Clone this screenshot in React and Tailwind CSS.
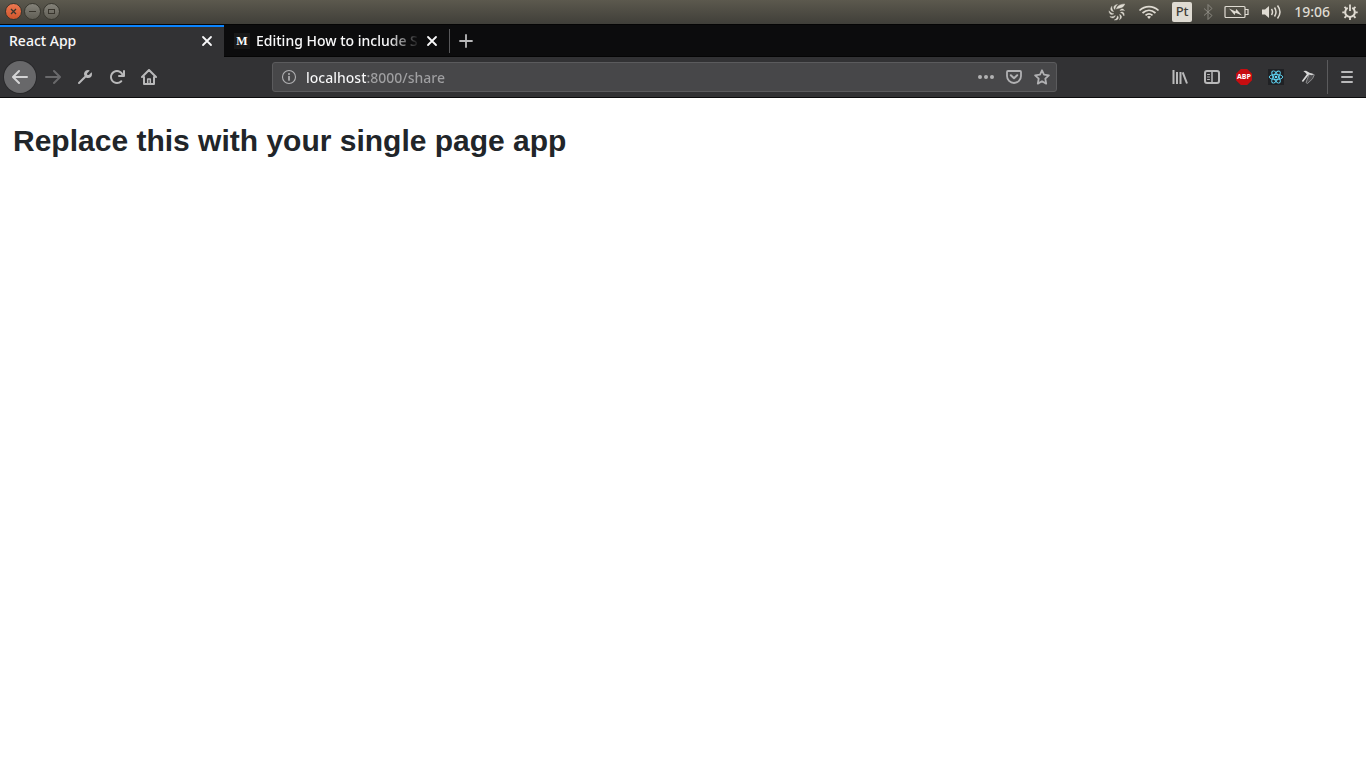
import React from 'react';

function Icon({ children, className = '', viewBox = '0 0 16 16', fill = 'none' }) {
  return (
    <svg
      className={`size-4 shrink-0 ${className}`}
      viewBox={viewBox}
      fill={fill}
      stroke={fill === 'none' ? 'currentColor' : 'none'}
      strokeWidth="2"
      strokeLinecap="round"
      strokeLinejoin="round"
      aria-hidden="true"
    >
      {children}
    </svg>
  );
}

function ToolButton({ label, children, className = 'text-[#b9b9ba]' }) {
  return (
    <button
      type="button"
      aria-label={label}
      className={`flex size-8 shrink-0 items-center justify-center ${className}`}
    >
      {children}
    </button>
  );
}

function WindowButton({ label, close = false, children }) {
  const tone = close
    ? 'bg-linear-to-b from-[#ee7850] to-[#d0562c] border-[#38352d]'
    : 'bg-linear-to-b from-[#85837a] to-[#605e55] border-[#38372f]';
  return (
    <button
      type="button"
      aria-label={label}
      className={`flex size-[17px] items-center justify-center rounded-full border text-[#38352d] ${tone}`}
    >
      <svg className="size-[15px]" viewBox="0 0 15 15" fill="none" stroke="currentColor" aria-hidden="true">
        {children}
      </svg>
    </button>
  );
}

function SystemBar() {
  return (
    <header className="flex h-6 items-center justify-between bg-linear-to-b from-[#5c594e] to-[#403f39] pr-2 pl-[5px] text-[#dfdbd2]">
      <div className="flex gap-[2px] pb-px">
        <WindowButton label="Close window" close>
          <path d="M5 5l5 5M10 5l-5 5" strokeWidth="1.3" />
        </WindowButton>
        <WindowButton label="Minimize window">
          <path d="M4 7.5h7" />
        </WindowButton>
        <WindowButton label="Maximize window">
          <rect x="4.5" y="5.5" width="6" height="4" />
        </WindowButton>
      </div>
      <div className="flex items-center">
        <svg className="mr-3 size-[18px]" viewBox="0 0 18 18" fill="currentColor" stroke="currentColor" strokeWidth=".4" role="img" aria-label="Swirl">
          <path d="M8.500 6C9 3 12 1.200 16.800 1C16 3.500 14 4.800 11 5.200Q9.500 5.400 8.500 6z" />
          <path d="M6.800 6.500C5 4.500 5.800 2 9.500 1.500C7.800 2.800 7.300 4.300 6.800 6.500z" />
          <path d="M5.600 8.500C2.800 8.500 1.800 6 3.800 3.300C3.700 5.500 4.300 7 5.600 8.500z" />
          <path d="M5.800 10.800C3.500 12.500 1 11 1 7.800C2.300 9.700 3.700 10.500 5.800 10.800z" />
          <path d="M7.300 12.500C6.800 15.300 4 15.800 1.800 13.500C4 14 5.600 13.700 7.300 12.500z" />
          <path d="M9.500 12.800C11.500 15 9.800 17.500 6.300 17C8.300 16.200 9.200 14.900 9.500 12.800z" />
          <path d="M11.500 11.600C14.200 12.300 14.300 15.300 11.500 16.800C12.400 14.800 12.400 13.300 11.500 11.600z" />
          <path d="M12.500 9.500C14.700 8.200 16.800 10 16 13C15.100 11.200 14.200 10.200 12.500 9.500z" />
          <path d="M12 7.500C12.800 5.500 15.300 5.300 16.500 7.500C14.900 7 13.600 7 12 7.500z" />
        </svg>
        <svg className="mr-3 h-[18px] w-[22px]" viewBox="0 0 22 18" fill="none" stroke="currentColor" strokeWidth="1.700" role="img" aria-label="Wi-Fi">
          <path d="M1.500 7.500C7 2.300 15 2.300 20.500 7.500" />
          <path d="M4.500 10C8.500 6.400 13.500 6.400 17.500 10" />
          <path d="M7.500 12.400C9.600 10.600 12.400 10.600 14.500 12.400" />
          <path d="M9 13.800Q11 12.400 13 13.800L11 16z" fill="currentColor" stroke="none" />
        </svg>
        <span className="mr-2 flex h-5 w-5 items-center justify-center rounded-[2px] bg-[#dfdbd2] font-['Noto_Sans',sans-serif] text-[13px] font-medium text-[#3f3e38]">
          Pt
        </span>
        <svg className="mr-2 size-4" viewBox="0 0 16 16" fill="none" stroke="#8a8880" role="img" aria-label="Bluetooth off">
          <path d="M4 4.500l8 7L8 15.500V.5l4 4-8 7" />
        </svg>
        <svg className="mr-3 h-4 w-[25px]" viewBox="0 0 25 16" fill="none" stroke="currentColor" role="img" aria-label="Battery charging">
          <path d="M2 2.500h18a1 1 0 0 1 1 1v9a1 1 0 0 1-1 1h-18a1 1 0 0 1-1-1v-9a1 1 0 0 1 1-1zM21.500 5.500h2.500v5h-2.500" strokeWidth="1.200" />
          <path d="M5 4.500l6.500 3 .8-2.500 5.700 6.500-6.500-2.700-.9 2.200z" fill="currentColor" stroke="none" />
        </svg>
        <svg className="mr-3 h-4 w-[21px]" viewBox="0 0 21 16" fill="none" stroke="currentColor" strokeWidth="1.500" role="img" aria-label="Volume">
          <path d="M1 5.500h3L8 2v12l-4-3.500H1z" fill="currentColor" stroke="none" />
          <path d="M10.500 5Q12.500 8 10.500 11M13.500 3.500Q16.500 8 13.500 12.500M16.500 1.500Q21.500 8 16.500 14.500" />
        </svg>
        <time className="mr-3 font-['Noto_Sans',sans-serif] text-[14px] leading-5 font-medium">19:06</time>
        <svg className="size-4" viewBox="0 0 16 16" fill="none" stroke="currentColor" role="img" aria-label="System menu">
          <path d="M5.700 3.900A4.800 4.800 0 1 0 10.300 3.900" strokeWidth="2" />
          <path d="M8 .5v6.500M.3 8.300h2.500M13.200 8.300h2.500M2.500 2.800l1.800 1.800M13.500 2.800l-1.800 1.800M2.500 13.800l1.800-1.800M13.500 13.800l-1.800-1.800M8 13v3" strokeWidth="1.800" />
        </svg>
      </div>
    </header>
  );
}

function CloseTab({ label }) {
  return (
    <button type="button" aria-label={label} className="flex size-4 shrink-0 items-center justify-center text-[#f9f9fa]">
      <Icon><path d="M4 4l8 8M12 4l-8 8" strokeWidth="1.800" /></Icon>
    </button>
  );
}

function TabStrip() {
  return (
    <nav aria-label="Tabs" className="flex h-[33px] border-t border-[#050505] bg-[#0c0c0d] font-['Noto_Sans',sans-serif] text-[14px] leading-5 font-medium text-[#f9f9fa]">
      <div className="flex w-56 items-center justify-between border-t-2 border-[#0a84ff] bg-[#323234] px-[9px] pb-[2px]">
        <span>React App</span>
        <CloseTab label="Close React App" />
      </div>
      <div className="flex w-[225px] items-center border-b border-[#050505] pr-[9px] pl-[10px]">
        <span className="mr-[6px] flex size-4 shrink-0 items-center justify-center bg-[#181818] font-['Liberation_Serif',serif] text-[12px] font-bold text-white">
          M
        </span>
        <span className="mr-1 min-w-0 flex-1 whitespace-nowrap mask-[linear-gradient(to_left,transparent,black_32px)]">
          Editing How to include S
        </span>
        <CloseTab label="Close Editing How to include" />
      </div>
      <div className="flex flex-1 items-center border-b border-[#050505]">
        <span className="h-6 w-px bg-[#58585a]" />
        <button type="button" aria-label="New tab" className="flex size-8 items-center justify-center text-[#b9b9ba]">
          <Icon><path d="M8 2v12M2 8h12" strokeWidth="1.800" /></Icon>
        </button>
      </div>
    </nav>
  );
}

function AddressBar() {
  return (
    <div className="flex h-[30px] w-full max-w-[785px] items-center rounded-[3px] border border-[#5b5b5d] bg-[#474749] pr-[6px] pl-2 text-[#b1b1b3]">
      <Icon className="mr-[9px]">
        <circle cx="8" cy="8" r="6.500" strokeWidth="1.100" />
        <path d="M8 7.500v3.500" strokeWidth="1.700" />
        <circle cx="8" cy="5" r="1" fill="currentColor" stroke="none" />
      </Icon>
      <input
        type="text"
        aria-label="Address"
        defaultValue="localhost:8000/share"
        className="h-5 min-w-0 flex-1 bg-[linear-gradient(to_right,#f9f9fa_60px,#a0a0a2_60px)] bg-clip-text font-['Noto_Sans',sans-serif] text-[14px] font-medium text-transparent outline-none"
      />
      <div className="flex gap-3">
        <button type="button" aria-label="Page actions">
          <Icon fill="currentColor"><circle cx="2" cy="8" r="2" /><circle cx="8" cy="8" r="2" /><circle cx="14" cy="8" r="2" /></Icon>
        </button>
        <button type="button" aria-label="Save to Pocket">
          <Icon>
            <path d="M2 2h12a1 1 0 0 1 1 1v4a7 7 0 0 1-14 0V3a1 1 0 0 1 1-1z" strokeWidth="1.800" />
            <path d="M4.800 6.200L8 9.300l3.200-3.100" />
          </Icon>
        </button>
        <button type="button" aria-label="Bookmark this page">
          <Icon><path d="M8 1.300l2 4.400 4.900.6-3.600 3.300.9 5L8 12.200l-4.200 2.400.9-5L1.100 6.300 6 5.700z" strokeWidth="1.800" /></Icon>
        </button>
      </div>
    </div>
  );
}

function Toolbar() {
  return (
    <div className="flex h-[41px] items-center border-b border-[#0c0c0d] bg-[#323234] pr-[3px] pl-1">
      <ToolButton label="Back" className="rounded-full bg-[#68686a] text-[#d4d4d5] ring-1 ring-[#29292b]">
        <Icon><path d="M15 8H1.500M7 2L1 8l6 6" /></Icon>
      </ToolButton>
      <ToolButton label="Forward" className="ml-px text-[#69696b]">
        <Icon><path d="M1 8h13.500M9 2l6 6-6 6" /></Icon>
      </ToolButton>
      <ToolButton label="Developer tools">
        <Icon fill="currentColor">
          <path d="M14.555 3.200l-2.434 2.436a1.243 1.243 0 1 1-1.757-1.757L12.800 1.445A3.956 3.956 0 0 0 11 1a3.976 3.976 0 0 0-3.434 6.020l-6.273 6.273a1 1 0 1 0 1.414 1.414L8.980 8.434A3.960 3.960 0 0 0 11 9a4 4 0 0 0 4-4 3.956 3.956 0 0 0-.445-1.800z" />
        </Icon>
      </ToolButton>
      <ToolButton label="Reload">
        <Icon fill="currentColor">
          <path d="M15 1a1 1 0 0 0-1 1v2.418A6.995 6.995 0 1 0 8 15a6.954 6.954 0 0 0 4.950-2.050 1 1 0 0 0-1.414-1.414A5.019 5.019 0 1 1 12.549 6H10a1 1 0 0 0 0 2h5a1 1 0 0 0 1-1V2a1 1 0 0 0-1-1z" />
        </Icon>
      </ToolButton>
      <ToolButton label="Home">
        <Icon>
          <path d="M1 8l7-7 7 7M3 8v7h10V8" />
          <path d="M6.700 14.500v-4.500h2.600v4.500" strokeWidth="1.500" />
        </Icon>
      </ToolButton>
      <div className="flex flex-1 justify-center px-[107px]">
        <AddressBar />
      </div>
      <ToolButton label="Library">
        <Icon><path d="M1.500 1v14M5 3v12M8.500 3v12M10.700 3.300l4.300 11.200" strokeLinecap="butt" /></Icon>
      </ToolButton>
      <ToolButton label="Sidebars">
        <Icon>
          <rect x="1" y="2" width="14" height="12" rx="2" />
          <path d="M8 2v12" strokeWidth="1.500" />
          <path d="M3.500 5.500h2M3.500 8h2M3.500 10.500h2" strokeWidth="1" />
        </Icon>
      </ToolButton>
      <ToolButton label="Adblock Plus">
        <span className="flex size-4 items-center justify-center bg-[#c70d10] font-['Open_Sans',sans-serif] text-[7px] font-bold text-white [clip-path:polygon(30%_0,70%_0,100%_30%,100%_70%,70%_100%,30%_100%,0_70%,0_30%)]">
          ABP
        </span>
      </ToolButton>
      <ToolButton label="React Developer Tools">
        <svg className="size-4 bg-[#202124]" viewBox="0 0 16 16" fill="none" stroke="#61dafb" strokeWidth=".9" aria-hidden="true">
          <ellipse cx="8" cy="8" rx="6.800" ry="2.600" />
          <ellipse cx="8" cy="8" rx="6.800" ry="2.600" transform="rotate(60 8 8)" />
          <ellipse cx="8" cy="8" rx="6.800" ry="2.600" transform="rotate(120 8 8)" />
          <circle cx="8" cy="8" r="1.300" fill="#61dafb" stroke="none" />
        </svg>
      </ToolButton>
      <ToolButton label="Build tools">
        <svg className="size-4" viewBox="0 0 16 16" fill="none" aria-hidden="true">
          <path d="M9.500 4.500l4.800 1.300-1.800 4-5 4.700-1.500-1z" fill="#4c4c4e" stroke="#8d8d8f" />
          <path d="M3.300 2L6 1.800 10 4l3.500 1-1.500 1.300-3-.8L3 13 1.800 12l5-6.800L5.500 3.800z" fill="#d8d8d8" />
        </svg>
      </ToolButton>
      <span className="mx-[3px] h-[34px] w-px bg-[#5b5b5d]" />
      <ToolButton label="Open menu">
        <Icon><path d="M3 3h10M3 8h10M3 13h10" /></Icon>
      </ToolButton>
    </div>
  );
}

export default function App() {
  return (
    <div className="min-h-screen bg-white">
      <SystemBar />
      <TabStrip />
      <Toolbar />
      <main className="px-[13px] py-[25px]">
        <h1 className="font-['Liberation_Sans',Arial,sans-serif] text-[30px] leading-9 font-bold text-[#212529]">
          Replace this with your single page app
        </h1>
      </main>
    </div>
  );
}
